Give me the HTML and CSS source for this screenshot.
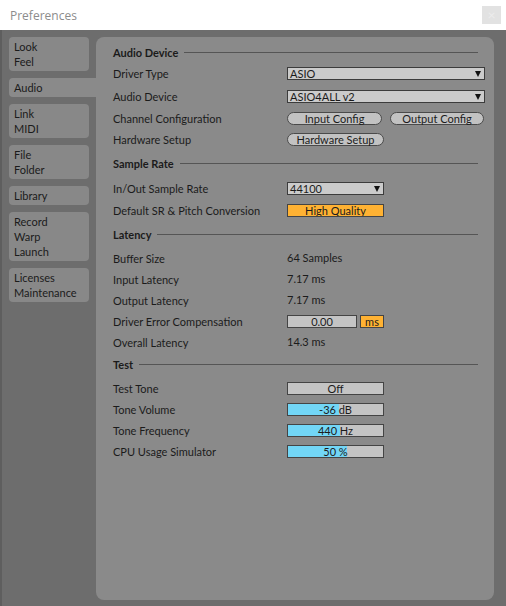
FILE: index.html
```html
<!DOCTYPE html>
<html lang="en">
<head>
	<meta charset="UTF-8">
	<title>Preferences</title>
	<link rel="stylesheet" href="styles.css">
</head>
<body>
	<div class="titlebar">
		<span class="title">Preferences</span>
		<span class="close">&times;</span>
	</div>
	<div class="window">
		<div class="tabs">
			<div class="tab">Look<br>Feel</div>
			<div class="tab active">Audio</div>
			<div class="tab">Link<br>MIDI</div>
			<div class="tab">File<br>Folder</div>
			<div class="tab">Library</div>
			<div class="tab">Record<br>Warp<br>Launch</div>
			<div class="tab">Licenses<br>Maintenance</div>
		</div>
		<div class="panel">
			<div class="head first"><span>Audio Device</span></div>
			<div class="row tall top">
				<span class="label">Driver Type</span>
				<div class="select wide">ASIO<i class="arrow"></i></div>
			</div>
			<div class="row tall">
				<span class="label">Audio Device</span>
				<div class="select wide">ASIO4ALL v2<i class="arrow"></i></div>
			</div>
			<div class="row">
				<span class="label">Channel Configuration</span>
				<div class="pills">
					<div class="pill in">Input Config</div>
					<div class="pill out">Output Config</div>
				</div>
			</div>
			<div class="row">
				<span class="label">Hardware Setup</span>
				<div class="pill hw">Hardware Setup</div>
			</div>

			<div class="head"><span>Sample Rate</span></div>
			<div class="row tall">
				<span class="label">In/Out Sample Rate</span>
				<div class="select">44100<i class="arrow"></i></div>
			</div>
			<div class="row">
				<span class="label">Default SR &amp; Pitch Conversion</span>
				<div class="box orange">High Quality</div>
			</div>

			<div class="head"><span>Latency</span></div>
			<div class="row">
				<span class="label">Buffer Size</span>
				<span class="value">64 Samples</span>
			</div>
			<div class="row">
				<span class="label">Input Latency</span>
				<span class="value">7.17 ms</span>
			</div>
			<div class="row">
				<span class="label">Output Latency</span>
				<span class="value">7.17 ms</span>
			</div>
			<div class="row">
				<span class="label">Driver Error Compensation</span>
				<div class="box comp">0.00</div>
				<div class="box orange unit">ms</div>
			</div>
			<div class="row">
				<span class="label">Overall Latency</span>
				<span class="value">14.3 ms</span>
			</div>

			<div class="head test"><span>Test</span></div>
			<div class="row">
				<span class="label">Test Tone</span>
				<div class="box">Off</div>
			</div>
			<div class="row">
				<span class="label">Tone Volume</span>
				<div class="box meter"><div class="fill" style="width:54%"></div><span>-36 dB</span></div>
			</div>
			<div class="row">
				<span class="label">Tone Frequency</span>
				<div class="box meter"><div class="fill" style="width:55%"></div><span>440 Hz</span></div>
			</div>
			<div class="row">
				<span class="label">CPU Usage Simulator</span>
				<div class="box meter"><div class="fill" style="width:62%"></div><span>50 %</span></div>
			</div>
		</div>
	</div>
</body>
</html>
```

FILE: styles.css
```css
* { box-sizing: border-box; }
body { margin: 0;background: #6d6d6d;font-family: Lato, "Liberation Sans", sans-serif;font-size: 11px;color: #1b1b1b; }

.titlebar { height: 30px;background: #fff;display: flex;align-items: center;justify-content: space-between;padding: 0 5px 0 10px; }
.title { font-family: "Open Sans", "Liberation Sans", sans-serif;font-size: 12px;color: #8c8c8c; }
.close { width: 19px;height: 18px;background: #e2e2e2;color: #ececec;font-size: 14px;line-height: 18px;text-align: center; }

.window { height: 576px;display: flex;padding: 7px 12px 6px 0;border-left: 2px solid #5e5e5e; }

.tabs { width: 94px;padding-left: 7px;display: flex;flex-direction: column;gap: 7px;flex-shrink: 0; }
.tab { width: 80px;background: #888;border-radius: 4px;padding: 2px 5px;line-height: 15px; }
.tab.active { width: 87px;background: #8a8a8a;border-radius: 4px 0 0 4px; }

.panel { flex: 1;background: #8a8a8a;border-radius: 8px;padding: 5px 9px 0 17px; }

.head { height: 20px;display: flex;align-items: center;margin-top: 3px;margin-right: 7px;font-weight: bold; }
.head.first { margin-top: 0; }
.head.test { margin-top: 1px; }
.head::after { content: "";flex: 1;height: 1px;background: #555;margin-left: 6px; }
.head + .row { margin-top: 4px; }
.head + .row.top { margin-top: 0; }

.row { height: 21px;display: flex;align-items: center; }
.row.tall { height: 23px; }
.label { width: 174px;flex-shrink: 0; }
.value { margin-top: -2px; }

.select { width: 97px;height: 13px;background: #cbcbcb;border: 1px solid #3c3c3c;line-height: 11px;padding-left: 2px;display: flex;align-items: center;justify-content: space-between; }
.select.wide { width: 198px; }
.arrow { width: 0;height: 0;border-left: 3.5px solid transparent;border-right: 3.5px solid transparent;border-top: 6px solid #111;margin-right: 3px; }

.pills { display: flex;gap: 8px; }
.pill { height: 13px;background: #c2c2c2;border: 1px solid #4a4a4a;border-radius: 7px;line-height: 11px;text-align: center; }
.pill.in { width: 95px; }
.pill.out { width: 94px; }
.pill.hw { width: 97px; }

.box { position: relative;width: 97px;height: 13px;background: #c4c4c4;border: 1px solid #444;line-height: 11px;text-align: center;overflow: hidden; }
.box.orange { background: #ffb233; }
.box.comp { width: 70px; }
.box.unit { width: 24px;margin-left: 3px; }
.meter .fill { height: 100%;background: #72d6f6; }
.meter span { position: absolute;left: 0;right: 0;top: 0; }
```
